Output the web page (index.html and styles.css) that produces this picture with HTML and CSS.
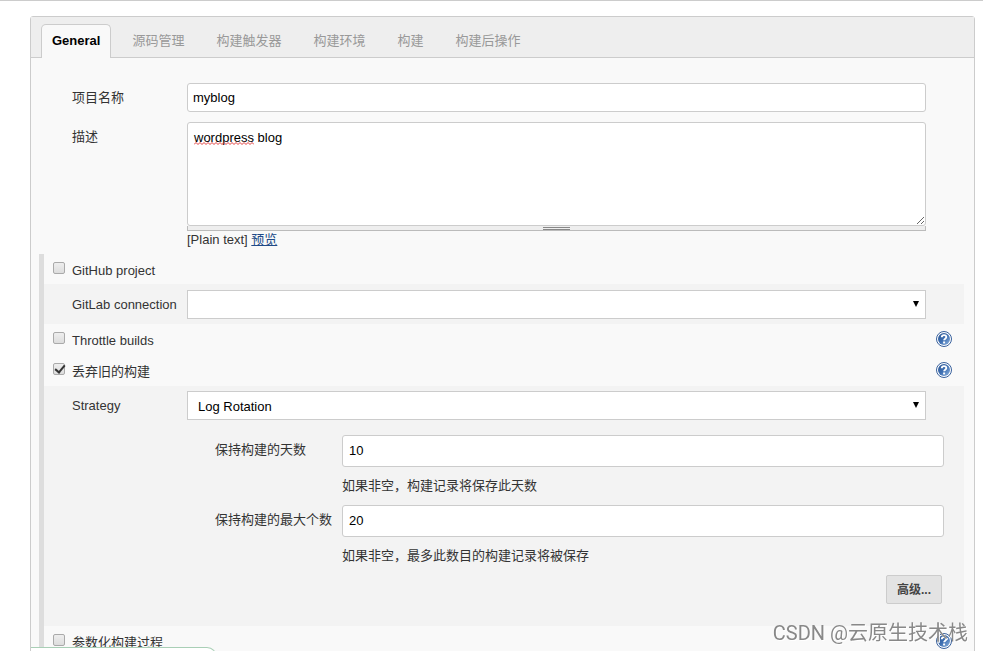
FILE: index.html
```html
<!DOCTYPE html>
<html lang="zh-CN">
<head>
    <meta charset="UTF-8">
    <meta name="viewport" content="width=device-width, initial-scale=1.0">
    <title>myblog Config</title>
    <link rel="stylesheet" href="styles.css">
</head>
<body>
    <svg class="defs" width="0" height="0" aria-hidden="true">
        <defs>
            <linearGradient id="help-fill" x1="0" y1="0" x2="1" y2="1">
                <stop offset="0" stop-color="#2c5591"/>
                <stop offset="0.5" stop-color="#3f70b3"/>
                <stop offset="1" stop-color="#8fb4df"/>
            </linearGradient>
            <symbol id="help-icon" viewBox="0 0 16 16">
                <circle cx="8" cy="8" r="7.5" fill="#fff" stroke="#38609c"/>
                <circle cx="8" cy="8" r="6" fill="url(#help-fill)"/>
                <path d="M5.8 6.2C5.8 3.4 10.3 3.5 10.3 6C10.3 7.7 8.1 7.6 8.1 9.3" fill="none" stroke="#fff" stroke-width="1.9"/>
                <rect x="7.1" y="10.5" width="2" height="1.9" fill="#fff"/>
            </symbol>
        </defs>
    </svg>

    <form class="config">
        <nav class="tab-bar">
            <a class="tab active" href="#general">General</a>
            <a class="tab" href="#scm">源码管理</a>
            <a class="tab" href="#triggers">构建触发器</a>
            <a class="tab" href="#environment">构建环境</a>
            <a class="tab" href="#build">构建</a>
            <a class="tab" href="#post-build">构建后操作</a>
        </nav>

        <div class="section basic" id="general">
            <div class="row">
                <label class="name" for="project-name">项目名称</label>
                <input class="text-input" type="text" id="project-name" value="myblog">
            </div>
            <div class="row">
                <label class="name" for="description">描述</label>
                <div class="description">
                    <textarea id="description" spellcheck="false">wordpress blog</textarea>
                    <svg class="spelling" width="60" height="3" viewBox="0 0 60 3" aria-hidden="true">
                        <path d="M0 2.5L2 .5L4 2.5L6 .5L8 2.5L10 .5L12 2.5L14 .5L16 2.5L18 .5L20 2.5L22 .5L24 2.5L26 .5L28 2.5L30 .5L32 2.5L34 .5L36 2.5L38 .5L40 2.5L42 .5L44 2.5L46 .5L48 2.5L50 .5L52 2.5L54 .5L56 2.5L58 .5L60 2.5" fill="none" stroke="#e03c3c"/>
                    </svg>
                    <div class="handle"><span class="grip"></span></div>
                    <div class="markup">[Plain text] <a href="#preview">预览</a></div>
                </div>
            </div>
        </div>

        <div class="section options">
            <div class="row check-row">
                <input class="check" type="checkbox" id="github">
                <label class="name" for="github">GitHub project</label>
            </div>
            <div class="row shaded">
                <label class="name" for="gitlab">GitLab connection</label>
                <div class="select-wrap">
                    <select id="gitlab"><option></option></select>
                </div>
            </div>
            <div class="row check-row">
                <input class="check" type="checkbox" id="throttle">
                <label class="name" for="throttle">Throttle builds</label>
                <a class="help" href="#help-throttle" aria-label="Help"><svg width="16" height="16"><use href="#help-icon"/></svg></a>
            </div>
            <div class="row check-row">
                <input class="check" type="checkbox" id="discard" checked>
                <label class="name" for="discard">丢弃旧的构建</label>
                <a class="help" href="#help-discard" aria-label="Help"><svg width="16" height="16"><use href="#help-icon"/></svg></a>
            </div>
            <div class="strategy">
                <div class="row">
                    <label class="name" for="strategy">Strategy</label>
                    <div class="select-wrap">
                        <select id="strategy"><option>Log Rotation</option></select>
                    </div>
                </div>
                <div class="rotation">
                    <label for="days">保持构建的天数</label>
                    <input class="text-input" type="text" id="days" value="10">
                    <p class="hint">如果非空，构建记录将保存此天数</p>
                    <label for="builds">保持构建的最大个数</label>
                    <input class="text-input" type="text" id="builds" value="20">
                    <p class="hint">如果非空，最多此数目的构建记录将被保存</p>
                </div>
                <div class="advanced">
                    <button type="button">高级...</button>
                </div>
            </div>
            <div class="row check-row">
                <input class="check" type="checkbox" id="params">
                <label class="name" for="params">参数化构建过程</label>
                <a class="help" href="#help-params" aria-label="Help"><svg width="16" height="16"><use href="#help-icon"/></svg></a>
            </div>
        </div>
    </form>

    <div class="save-bar"></div>
    <div class="watermark">CSDN @云原生技术栈</div>
</body>
</html>
```

FILE: styles.css
```css
* {
    margin: 0;
    padding: 0;
    box-sizing: border-box;
}

body {
    height: 100vh;
    overflow: hidden;
    padding: 15px 8px 0 30px;
    border-top: 1px solid #ccc;
    background-color: #fff;
    color: #333;
    font-family: "Liberation Sans", "Noto Sans CJK SC", sans-serif;
    font-size: 13px;
    line-height: 18px;
}

input,
textarea,
select,
button {
    font-family: inherit;
    font-size: 13px;
    color: #000;
}

.defs {
    position: absolute;
}

.config {
    min-height: 100%;
    border: 1px solid #ccc;
    border-radius: 3px;
    background-color: #f9f9f9;
}

/* tabs */
.tab-bar {
    display: flex;
    align-items: flex-end;
    gap: 10px;
    height: 41px;
    padding-left: 10px;
    border-bottom: 1px solid #ccc;
    background-color: #eee;
}

.tab {
    height: 33px;
    padding: 8px 11px 0;
    color: #999;
    text-decoration: none;
}

.tab.active {
    height: 34px;
    margin-bottom: -1px;
    padding: 7px 10px 0;
    border: 1px solid #ccc;
    border-bottom: none;
    border-radius: 5px 5px 0 0;
    background-color: #f9f9f9;
    color: #000;
    font-weight: bold;
}

/* form rows */
.section {
    margin: 0 10px 0 8px;
    border-left: 5px solid transparent;
}

.basic {
    padding-top: 25px;
}

.basic .row {
    margin-bottom: 10px;
}

.basic .row:last-child {
    margin-bottom: 5px;
}

.options {
    border-left-color: #ddd;
}

.row {
    display: grid;
    grid-template-columns: 28px 115px 1fr 38px;
}

.name {
    grid-column: 2;
    padding-top: 6px;
}

.text-input {
    width: 100%;
    height: 29px;
    padding: 0 5px;
    border: 1px solid #ccc;
    border-radius: 3px;
    background-color: #fff;
}

.description {
    position: relative;
}

.description textarea {
    display: block;
    width: 100%;
    height: 104px;
    padding: 7px 6px;
    border: 1px solid #ccc;
    border-radius: 3px;
    line-height: 16px;
    resize: both;
}

.spelling {
    position: absolute;
    top: 20px;
    left: 7px;
}

.handle {
    display: flex;
    justify-content: center;
    height: 5px;
    padding-top: 1px;
    border: 1px solid #bbb;
    border-top: none;
    background-color: #eee;
}

.grip {
    width: 27px;
    height: 3px;
    border-top: 1px solid #888;
    border-bottom: 1px solid #888;
}

.markup a {
    color: #204a87;
}

.check-row {
    min-height: 31px;
}

.check-row .name {
    grid-column: 2 / 4;
    padding-top: 8px;
}

.options .check-row:first-child {
    min-height: 30px;
}

.check {
    appearance: none;
    grid-row: 1;
    width: 12px;
    height: 12px;
    margin: 8px 0 0 9px;
    border: 1px solid #aaa;
    border-radius: 2px;
    background: linear-gradient(#eee, #ddd);
}

.check:checked::after {
    content: "";
    display: block;
    width: 4px;
    height: 8px;
    margin: -1px 0 0 3px;
    border: solid #333;
    border-width: 0 2px 2px 0;
    transform: rotate(40deg);
}

.help {
    grid-column: 4;
    padding: 7px 0 0 10px;
}

.help svg {
    display: block;
}

.shaded {
    padding: 6px 0 5px;
    background-color: #f3f3f3;
}

.select-wrap {
    position: relative;
}

.select-wrap select {
    appearance: none;
    display: block;
    width: 100%;
    height: 29px;
    padding: 1px 10px 0;
    border: 1px solid #ccc;
    border-radius: 0;
    background-color: #fff;
}

.select-wrap::after {
    content: "";
    position: absolute;
    top: 11px;
    right: 7px;
    border: 3px solid transparent;
    border-top: 6px solid #000;
    border-bottom: none;
    pointer-events: none;
}

/* log rotation */
.strategy {
    padding: 5px 0 22px;
    background-color: #f3f3f3;
}

.rotation {
    display: grid;
    grid-template-columns: 127px 1fr;
    padding: 15px 20px 0 171px;
}

.rotation label {
    padding-top: 6px;
}

.rotation .text-input {
    height: 32px;
    padding: 0 6px 1px;
}

.hint {
    grid-column: 2;
    height: 38px;
    padding-top: 10px;
}

.advanced {
    padding-right: 22px;
    text-align: right;
}

.advanced button {
    width: 56px;
    height: 29px;
    padding-bottom: 2px;
    border: 1px solid #ccc;
    border-radius: 2px;
    background-color: #e3e3e3;
    color: #444;
    font-size: 12px;
    font-weight: bold;
}

.save-bar {
    position: fixed;
    bottom: -32px;
    left: 31px;
    width: 186px;
    height: 36px;
    border: 1px solid #a9cfb6;
    border-left: none;
    border-radius: 0 10px 0 0;
    background-color: #fff;
}

.watermark {
    position: fixed;
    right: 15px;
    bottom: 4px;
    color: #888;
    font-family: Roboto, "Noto Sans CJK SC", sans-serif;
    font-size: 20px;
    line-height: 28px;
    text-shadow: 1px 1px 0 #fff;
}
```
